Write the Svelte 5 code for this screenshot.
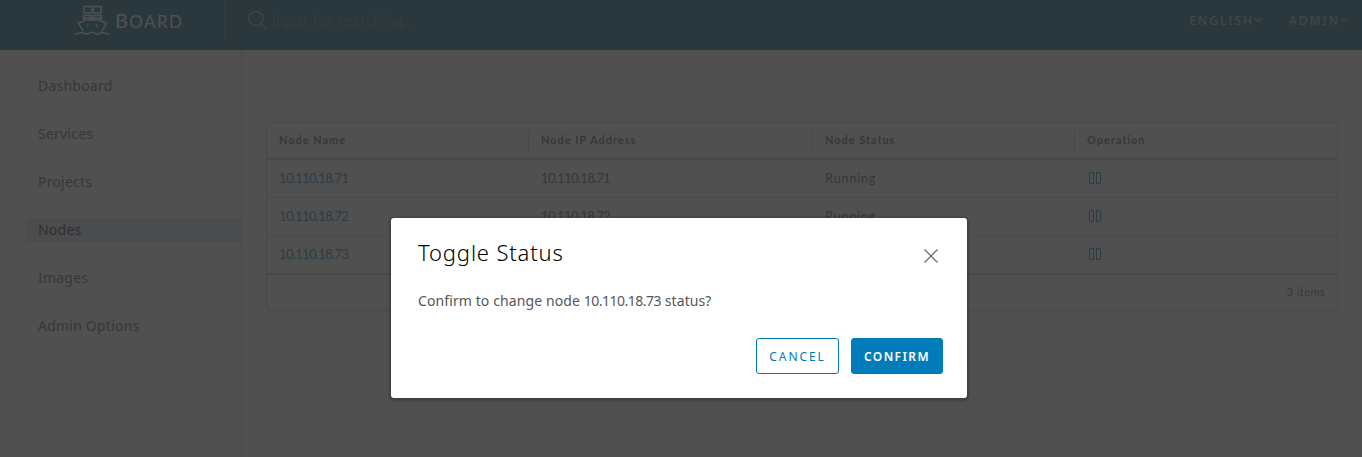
<script>
  const menu = ['Dashboard', 'Services', 'Projects', 'Nodes', 'Images', 'Admin Options'];
  const current = 'Nodes';
  const columns = ['Node Name', 'Node IP Address', 'Node Status', 'Operation'];
  const nodes = ['10.110.18.71', '10.110.18.72', '10.110.18.73'];
</script>

<div class="page">
  <header>
    <div class="brand">
      <svg width="38" height="34" viewBox="0 0 38 34" fill="none" stroke="#fff" stroke-width="1.5">
        <path d="M11 3.500h7.500v6.500h-7.500zM20.500 3.500h7.500v6.500h-7.500zM10.500 17v-4.500h8V17M20.500 17v-4.500h8V17M10.500 15h18" />
        <path d="M10.500 28C8 26 7 22.500 5.500 20L10 18.500l2-1.500h15l2 1.500 4.500 1.500C32 22.500 31 26 28.500 28" />
        <path d="M1 30.500c3 2 5-1.500 8-1 3 .5 3 2.500 6 1s4-2 7 0 4-.5 7-1 5 3 8 1" />
        <path d="M14 22.500h1.500M23 22.500h1.500" stroke-width="2" />
      </svg>
      <span>BOARD</span>
    </div>
    <div class="search">
      <svg width="20" height="20" viewBox="0 0 20 20" fill="none" stroke="#9bb5c2" stroke-width="1.300">
        <circle cx="8" cy="8.500" r="7" /><path d="M13 13.500L18 18.500" />
      </svg>
      <span>input for searching...</span>
    </div>
    <nav>
      <span class="lang">ENGLISH</span>
      <svg width="8" height="6" viewBox="0 0 8 6"><path d="M.5 1L4 4.500 7.500 1" fill="none" stroke="#a9bdc8" stroke-width="1.200" /></svg>
      <span class="user">ADMIN</span>
      <svg width="8" height="6" viewBox="0 0 8 6"><path d="M.5 1L4 4.500 7.500 1" fill="none" stroke="#a9bdc8" stroke-width="1.200" /></svg>
    </nav>
  </header>
  <div class="body">
    <aside>
      {#each menu as label}
        <div class="item" class:active={label === current}>{label}</div>
      {/each}
    </aside>
    <main>
      <div class="grid">
        <div class="row head">
          {#each columns as c}<div class="cell">{c}</div>{/each}
        </div>
        {#each nodes as ip}
          <div class="row">
            <div class="cell ip link">{ip}</div>
            <div class="cell ip">{ip}</div>
            <div class="cell">Running</div>
            <div class="cell">
              <svg width="16" height="16" viewBox="0 0 16 16" fill="none" stroke="#007cbb" stroke-width="1"><path d="M2.500 2.500h4v11h-4zM9.500 2.500h4v11h-4z" /></svg>
            </div>
          </div>
        {/each}
        <div class="foot">3 items</div>
      </div>
    </main>
  </div>
</div>

<div class="backdrop">
  <div class="modal" role="dialog">
    <div class="title">
      <h3>Toggle Status</h3>
      <svg width="14" height="14" viewBox="0 0 14 14"><path d="M.5.5l13 13M13.500.5L.5 13.500" stroke="#666" stroke-width="1.200" /></svg>
    </div>
    <p>Confirm to change node <span>10.110.18.73</span> status?</p>
    <div class="buttons">
      <button class="cancel">CANCEL</button>
      <button class="confirm">CONFIRM</button>
    </div>
  </div>
</div>

<style>
  :global(body) { margin: 0; overflow: hidden; }
  .page { width: 1362px; height: 457px; background: #fafafa; font-family: Lato, sans-serif; color: #565656; }
  header { height: 40px; padding-bottom: 10px; background: #00567a; display: flex; align-items: center; color: #fff; }
  .brand { width: 151px; height: 40px; padding-left: 73px; display: flex; align-items: center; border-right: 1px solid #2a6f8e; }
  .brand svg { margin-top: -1px; }
  .brand span { display: inline-block; font: 17px/26px Lato, sans-serif; margin: 1px 0 0 4px; letter-spacing: 1.4px; }
  .brand span::first-letter { font-size: 20px; }
  .search { margin-left: 24px; display: flex; align-items: center; color: #577787; font-size: 15px; flex: 1; }
  .search svg { margin-left: -1px; }
  .search span { margin-left: 4px; letter-spacing: .45px; margin-top: -1px; }
  nav { display: flex; align-items: center; font: 500 12px 'Noto Sans', sans-serif; letter-spacing: 1.95px; color: #a9bdc8; padding-right: 14px; }
  nav .user { margin-left: 27px; }
  nav svg { margin-top: -1px; }
  .body { display: flex; height: 407px; }
  aside { width: 214px; padding: 24px 0 0 27px; border-right: 1px solid #ccc; }
  .item { height: 24px; line-height: 24px; margin-bottom: 24px; padding-left: 11px; font-family: 'Noto Sans', sans-serif; font-size: 14px; letter-spacing: .22px; border-radius: 3px 0 0 3px; }
  .item.active { background: #d9e4ea; color: #222; }
  main { flex: 1; padding: 72px 24px 0; }
  .grid { border: 1px solid #ccc; border-radius: 3px; height: 187px; }
  .row { display: grid; grid-template-columns: 262px 284px 262px 1fr; height: 37px; border-bottom: 1px solid #ddd; align-items: center; font-size: 13px; }
  .cell { padding-left: 12px; letter-spacing: .6px; line-height: 16px; padding-bottom: 2px; }
  .cell svg { display: block; margin-bottom: -1px; }
  .ip { letter-spacing: -.65px; }
  .head { height: 35px; border-bottom: 2px solid #ccc; font-size: 11px; font-weight: 700; }
  .head .cell { height: 24px; line-height: 22px; padding-bottom: 0; border-left: 1px solid #ccc; margin-left: -1px; letter-spacing: .95px; }
  .head .cell:first-child { border-color: transparent; }
  .link { color: #007cbb; }
  .foot { border-top: 1px solid #bbb; height: 34px; line-height: 34px; text-align: right; padding-right: 12px; font-size: 11px; letter-spacing: .4px; }
  .backdrop { position: absolute; inset: 0; background: rgba(49, 49, 49, .85); display: flex; justify-content: center; align-items: flex-start; padding-top: 218px; padding-right: 4px; font-family: Lato, sans-serif; }
  .modal { width: 525px; height: 180px; padding: 0 24px 0 27px; background: #fff; border-radius: 3px; box-shadow: 0 1px 2px 2px rgba(0, 0, 0, .2); }
  .title { display: flex; justify-content: space-between; align-items: center; padding: 22px 5px 0 0; height: 28px; }
  h3 { margin: -4px 0 0; font: 300 22px/28px 'Noto Sans', sans-serif; color: #000; letter-spacing: .85px; }
  .title svg { margin-top: 4px; }
  p { margin: 21px 0 0; font: 14px/24px 'Noto Sans', sans-serif; color: #565656; letter-spacing: .1px; }
  p span { letter-spacing: -.5px; }
  .buttons { display: flex; justify-content: flex-end; gap: 12px; margin-top: 25px; }
  button { height: 36px; padding: 0; border-radius: 3px; border: 1px solid #007cbb; font: 12px 'Noto Sans', sans-serif; letter-spacing: 1.4px; }
  .cancel { width: 83px; background: #fff; color: #007cbb; letter-spacing: 1.9px; }
  .confirm { width: 92px; background: #007cbb; color: #fff; font-weight: 600; }
</style>
